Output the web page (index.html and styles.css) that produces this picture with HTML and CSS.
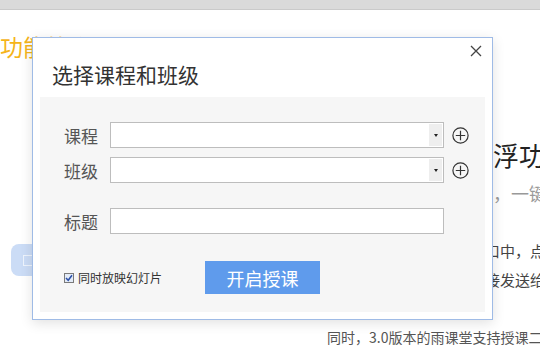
FILE: index.html
```html
<!DOCTYPE html>
<html lang="zh-CN">
<head>
    <meta charset="UTF-8">
    <title>选择课程和班级</title>
    <link rel="stylesheet" href="styles.css">
</head>
<body>
    <div class="topbar"></div>

    <div class="page">
        <h2 class="section-title">互动功能简介</h2>

        <div class="feature">
            <div class="feature-icon">
                <span class="feature-glyph"></span>
            </div>
            <div class="feature-text">
                <h3>悬浮功能</h3>
                <p class="lead">快，一键开启授课</p>
                <p class="desc">窗口中，点击授课<br>直接发送给学生</p>
            </div>
        </div>

        <p class="footnote">同时，3.0版本的雨课堂支持授课二维码</p>
    </div>

    <!-- modal -->
    <div class="dialog">
        <div class="dialog-header">
            <h1>选择课程和班级</h1>
            <button class="close-btn" title="关闭">
                <svg width="12" height="12" viewBox="0 0 12 12">
                    <path d="M1 1 L11 11 M11 1 L1 11" stroke="#444" stroke-width="1.3" fill="none"/>
                </svg>
            </button>
        </div>

        <div class="dialog-body">
            <div class="form-row">
                <label>课程</label>
                <div class="select-box"><span class="select-arrow"></span></div>
                <button class="add-btn">
                    <svg width="17" height="17" viewBox="0 0 17 17">
                        <circle cx="8.5" cy="8.5" r="7.6" stroke="#333" stroke-width="1.2" fill="none"/>
                        <path d="M8.5 3.8 V13.2 M3.8 8.5 H13.2" stroke="#333" stroke-width="1.2"/>
                    </svg>
                </button>
            </div>
            <div class="form-row">
                <label>班级</label>
                <div class="select-box"><span class="select-arrow"></span></div>
                <button class="add-btn">
                    <svg width="17" height="17" viewBox="0 0 17 17">
                        <circle cx="8.5" cy="8.5" r="7.6" stroke="#333" stroke-width="1.2" fill="none"/>
                        <path d="M8.5 3.8 V13.2 M3.8 8.5 H13.2" stroke="#333" stroke-width="1.2"/>
                    </svg>
                </button>
            </div>
            <div class="form-row form-row-title">
                <label>标题</label>
                <div class="text-input"></div>
            </div>

            <div class="form-actions">
                <label class="check">
                    <span class="check-box">
                        <svg width="8" height="8" viewBox="0 0 8 8">
                            <path d="M1 4 L3.2 6.3 L7 1.2" stroke="#2b4fa8" stroke-width="1.5" fill="none"/>
                        </svg>
                    </span>
                    同时放映幻灯片
                </label>
                <button class="btn-start">开启授课</button>
            </div>
        </div>
    </div>
</body>
</html>
```

FILE: styles.css
```css
body {
    margin: 0;
    width: 540px;
    height: 360px;
    overflow: hidden;
    position: relative;
    background: #fff;
    font-family: "Noto Sans CJK SC", "Noto Sans", sans-serif;
}
.topbar {
    height: 9px;
    background: #dadada;
    border-bottom: 1px solid #cacaca;
}
.page {
    overflow: hidden;
    white-space: nowrap;
}
.section-title {
    margin: 23px 0 0 -46px;
    font-size: 23px;
    line-height: 27px;
    font-weight: normal;
    color: #f5b41a;
}
.feature {
    display: flex;
    align-items: flex-start;
    margin-top: 78px;
}
.feature-icon {
    flex: none;
    margin: 106px 0 0 11px;
    width: 60px;
    height: 32px;
    border-radius: 8px;
    background: #cbdcf6;
    display: flex;
    align-items: center;
    padding-left: 12px;
    box-sizing: border-box;
}
.feature-glyph {
    width: 8px;
    height: 9px;
    border: 1px solid #eef4fd;
}
.feature-text {
    flex: none;
    margin-left: 396px;
}
.feature-text h3 {
    margin: 0;
    font-size: 26px;
    line-height: 34px;
    font-weight: normal;
    color: #222;
}
.feature-text p {
    margin: 0;
    color: #444;
}
.feature-text p.lead {
    margin: 6px 0 0 8px;
    font-size: 18px;
    line-height: 30px;
    color: #999;
}
.feature-text p.desc {
    margin: 28px 0 0 3px;
    font-size: 15px;
    line-height: 29px;
}
.footnote {
    margin: 29px 0 0 327px;
    font-size: 14px;
    line-height: 28px;
    color: #555;
}

/* dialog */
.dialog {
    position: absolute;
    left: 32px;
    top: 37px;
    width: 461px;
    height: 283px;
    box-sizing: border-box;
    background: #fff;
    border: 1px solid #9fbbe6;
    box-shadow: 0 3px 12px rgba(0,0,0,0.12);
    display: flex;
    flex-direction: column;
    padding: 0 7px 7px;
}
.dialog-header {
    height: 59px;
    display: flex;
    align-items: flex-start;
    justify-content: space-between;
}
.dialog-header h1 {
    margin: 24px 0 0 12px;
    font-size: 21px;
    line-height: 24px;
    font-weight: normal;
    color: #333;
}
.close-btn {
    margin: 7px 3px 0 0;
    padding: 0;
    border: none;
    background: none;
    width: 12px;
    height: 12px;
    cursor: pointer;
}
.dialog-body {
    flex: 1;
    background: #f6f6f6;
    padding: 25px 0 0 24px;
}
.form-row {
    display: flex;
    align-items: center;
    height: 26px;
    margin-bottom: 9px;
}
.form-row label {
    width: 46px;
    font-size: 17px;
    color: #555;
}
.form-row-title {
    margin-top: 25px;
}
.select-box,
.text-input {
    width: 334px;
    height: 26px;
    box-sizing: border-box;
    background: #fff;
    border: 1px solid #bdbdbd;
    display: flex;
    justify-content: flex-end;
    padding: 1px;
}
.select-arrow {
    width: 13px;
    background: #eeeeee;
    position: relative;
}
.select-arrow::after {
    content: "";
    position: absolute;
    left: 5px;
    top: 10px;
    border-left: 2px solid transparent;
    border-right: 2px solid transparent;
    border-top: 3px solid #222;
}
.add-btn {
    margin-left: 8px;
    padding: 0;
    border: none;
    background: none;
    width: 17px;
    height: 17px;
    cursor: pointer;
}
.form-actions {
    display: flex;
    align-items: center;
    margin-top: 27px;
}
.check {
    display: flex;
    align-items: center;
    width: 141px;
    font-size: 12px;
    color: #333;
}
.check-box {
    width: 10px;
    height: 10px;
    box-sizing: border-box;
    border: 1px solid #7a7a7a;
    background: #e3ebf7;
    margin-right: 4px;
    display: flex;
    align-items: center;
    justify-content: center;
}
.btn-start {
    width: 115px;
    height: 33px;
    border: none;
    background: #5f9bec;
    color: #fff;
    font-family: inherit;
    font-size: 18px;
    cursor: pointer;
}
```
